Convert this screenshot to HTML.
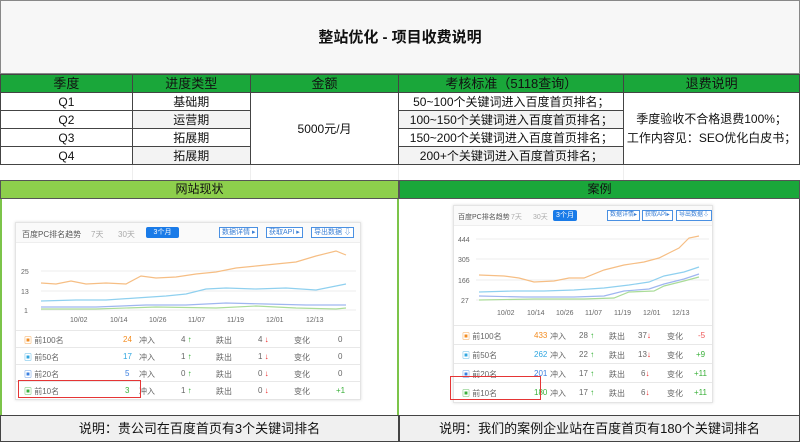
<!DOCTYPE html>
<html><head><meta charset="utf-8"><style>
*{margin:0;padding:0;box-sizing:border-box}
body{width:800px;height:442px;overflow:hidden;background:#fff;font-family:"Liberation Sans","Noto Sans CJK SC",sans-serif;position:relative;color:#111}
.a{position:absolute}
.title{left:0;top:0;width:800px;height:74px;background:#f7f7f7;border:1px solid #888;font-size:15px;font-weight:bold;text-align:center;line-height:74px}
table.t{position:absolute;left:0;top:74px;width:800px;border-collapse:collapse;font-size:12px}
table.t td{border:1px solid #444;text-align:center;height:18px;padding:0;line-height:16px}
table.t tr.h td{background:#1aa73a;color:#111;font-size:13px}
.g{background:#f3f3f3}
.c{font-size:8px;color:#555}
.box{background:#fff;border:1px solid #e4e4e4;box-shadow:0 0 3px #ddd}
.btn{position:absolute;border:1px solid #4a90e2;color:#3a7fd5;font-size:7px;line-height:9px;padding:0 2px;background:#fff}
.row{position:absolute;left:0;width:100%;border-top:1px solid #e8e8e8;font-size:8px;color:#666}
.row span{position:absolute}
.cap{top:415px;height:27px;background:#f0f0f0;border:1px solid #444;text-align:center;line-height:25px;font-size:13px}
</style></head><body>
<div class="a title">整站优化 - 项目收费说明</div>
<table class="t">
<colgroup><col style="width:132px"><col style="width:118px"><col style="width:149px"><col style="width:225px"><col style="width:176px"></colgroup>
<tr class="h"><td>季度</td><td>进度类型</td><td>金额</td><td>考核标准（5118查询）</td><td>退费说明</td></tr>
<tr><td>Q1</td><td>基础期</td><td rowspan="4">5000元/月</td><td>50~100个关键词进入百度首页排名；</td><td rowspan="4" style="line-height:19px">季度验收不合格退费100%；<br>工作内容见：SEO优化白皮书；</td></tr>
<tr><td>Q2</td><td class="g">运营期</td><td class="g">100~150个关键词进入百度首页排名；</td></tr>
<tr><td>Q3</td><td>拓展期</td><td>150~200个关键词进入百度首页排名；</td></tr>
<tr><td>Q4</td><td class="g">拓展期</td><td class="g">200+个关键词进入百度首页排名；</td></tr>
<tr><td style="border:none;border-right:1px solid #eee"></td><td style="border:none;border-right:1px solid #eee"></td><td style="border:none;border-right:1px solid #eee"></td><td style="border:none;border-right:1px solid #eee"></td><td style="border:none"></td></tr>
</table>
<div class="a" style="left:0;top:180px;width:399px;height:19px;background:#8dcf4c;border:1px solid #555;text-align:center;font-size:12px;line-height:17px">网站现状</div>
<div class="a" style="left:399px;top:180px;width:401px;height:19px;background:#1aa73a;border:1px solid #555;text-align:center;font-size:12px;line-height:17px">案例</div>
<div class="a" style="left:0;top:199px;width:399px;height:216px;border:2px solid #7cc44a;border-top:none;border-bottom:none"></div>
<div class="a" style="left:398px;top:199px;width:402px;height:216px;border-right:1px solid #444"></div>

<!-- left chart -->
<div class="a box" style="left:15px;top:222px;width:346px;height:178px">
<svg class="a" style="left:0;top:-7px" width="346" height="110">
<g stroke="#eee"><line x1="25" y1="55" x2="340" y2="55"/><line x1="25" y1="75" x2="340" y2="75"/><line x1="25" y1="94" x2="340" y2="94"/></g>
<g font-size="7" fill="#666" font-family="Liberation Sans"><text x="5" y="58">25</text><text x="5" y="78">13</text><text x="8" y="97">1</text>
<text x="54" y="106">10/02</text><text x="94" y="106">10/14</text><text x="133" y="106">10/26</text><text x="172" y="106">11/07</text><text x="211" y="106">11/19</text><text x="250" y="106">12/01</text><text x="290" y="106">12/13</text></g>
<polyline fill="none" stroke="#f6be84" stroke-width="1.2" points="25,67 40,68 55,65 70,68 90,67 110,68 125,60 140,62 160,61 180,58 200,56 220,52 240,50 260,48 280,46 300,40 320,35 330,39"/>
<polyline fill="none" stroke="#8fd0ef" stroke-width="1.2" points="25,85 60,84 90,84 120,82 150,80 170,78 190,73 210,72 240,73 270,72 300,74 320,70 330,68"/>
<polyline fill="none" stroke="#9fb6f0" stroke-width="1.2" points="25,91 80,91 130,89 170,89 210,87 250,88 290,89 330,89"/>
<polyline fill="none" stroke="#aadc99" stroke-width="1.2" points="25,93 80,93 140,91 200,92 240,90 280,92 320,93 330,92"/>
</svg>
<div class="a" style="left:0;top:0;width:100%;height:20px;background:#fafafa;border-bottom:1px solid #eee"></div>
<div class="a c" style="left:6px;top:6px">百度PC排名趋势</div>
<div class="a c" style="left:75px;top:6px;color:#aaa">7天</div>
<div class="a c" style="left:102px;top:6px;color:#aaa">30天</div>
<div class="a" style="left:130px;top:4px;width:33px;height:11px;background:#1a7be8;color:#fff;font-size:7px;text-align:center;line-height:11px;border-radius:2px">3个月</div>
<div class="btn" style="left:203px;top:4px">数据详情 ▸</div>
<div class="btn" style="left:250px;top:4px">获取API ▸</div>
<div class="btn" style="left:295px;top:4px">导出数据 ⇩</div>
<div class="row" style="top:107px;height:17px"><span style="left:8px;top:4px"><b style="color:#f38b1e">▣</b> 前100名</span><span style="left:107px;top:4px;color:#f38b1e">24</span><span style="left:123px;top:4px">冲入</span><span style="left:165px;top:4px">4 <b style="color:#2a2">↑</b></span><span style="left:200px;top:4px">跌出</span><span style="left:242px;top:4px">4 <b style="color:#e22">↓</b></span><span style="left:278px;top:4px">变化</span><span style="left:322px;top:4px">0</span></div>
<div class="row" style="top:124px;height:17px"><span style="left:8px;top:4px"><b style="color:#2fa6e0">▣</b> 前50名</span><span style="left:107px;top:4px;color:#2fa6e0">17</span><span style="left:123px;top:4px">冲入</span><span style="left:165px;top:4px">1 <b style="color:#2a2">↑</b></span><span style="left:200px;top:4px">跌出</span><span style="left:242px;top:4px">1 <b style="color:#e22">↓</b></span><span style="left:278px;top:4px">变化</span><span style="left:322px;top:4px">0</span></div>
<div class="row" style="top:141px;height:17px"><span style="left:8px;top:4px"><b style="color:#3a7fe0">▣</b> 前20名</span><span style="left:109px;top:4px;color:#3a7fe0">5</span><span style="left:123px;top:4px">冲入</span><span style="left:165px;top:4px">0 <b style="color:#2a2">↑</b></span><span style="left:200px;top:4px">跌出</span><span style="left:242px;top:4px">0 <b style="color:#e22">↓</b></span><span style="left:278px;top:4px">变化</span><span style="left:322px;top:4px">0</span></div>
<div class="row" style="top:158px;height:17px"><span style="left:8px;top:4px"><b style="color:#3ab03a">▣</b> 前10名</span><span style="left:109px;top:4px;color:#3ab03a">3</span><span style="left:123px;top:4px">冲入</span><span style="left:165px;top:4px">1 <b style="color:#2a2">↑</b></span><span style="left:200px;top:4px">跌出</span><span style="left:242px;top:4px">0 <b style="color:#e22">↓</b></span><span style="left:278px;top:4px">变化</span><span style="left:320px;top:4px;color:#3ab03a">+1</span></div>
</div>
<div class="a" style="left:18px;top:380px;width:123px;height:18px;border:1.5px solid #e53535"></div>

<!-- right chart -->
<div class="a box" style="left:453px;top:205px;width:260px;height:198px">
<svg class="a" style="left:0;top:12px" width="260" height="100">
<g stroke="#eee"><line x1="22" y1="21" x2="255" y2="21"/><line x1="22" y1="41" x2="255" y2="41"/><line x1="22" y1="62" x2="255" y2="62"/><line x1="22" y1="82" x2="255" y2="82"/></g>
<g font-size="7" fill="#666" font-family="Liberation Sans"><text x="4" y="24">444</text><text x="4" y="44">305</text><text x="4" y="65">166</text><text x="7" y="85">27</text>
<text x="43" y="97">10/02</text><text x="73" y="97">10/14</text><text x="102" y="97">10/26</text><text x="131" y="97">11/07</text><text x="160" y="97">11/19</text><text x="189" y="97">12/01</text><text x="218" y="97">12/13</text></g>
<polyline fill="none" stroke="#f6be84" stroke-width="1.2" points="25,57 50,58 65,60 80,64 100,63 115,60 130,60 150,52 170,47 190,44 205,40 215,35 225,30 235,20 245,18"/>
<polyline fill="none" stroke="#8fd0ef" stroke-width="1.2" points="25,74 60,73 90,73 120,72 150,70 175,67 195,64 210,58 230,54 245,49"/>
<polyline fill="none" stroke="#9fb6f0" stroke-width="1.2" points="25,78 70,79 120,79 150,78 170,73 195,71 210,66 230,61 245,56"/>
<polyline fill="none" stroke="#aadc99" stroke-width="1.2" points="25,82 80,81 130,81 160,80 175,74 200,73 210,68 230,63 245,59"/>
</svg>
<div class="a" style="left:0;top:0;width:100%;height:20px;background:#fafafa;border-bottom:1px solid #eee"></div>
<div class="a c" style="left:4px;top:6px;font-size:7px">百度PC排名趋势</div>
<div class="a c" style="left:57px;top:6px;color:#aaa;font-size:7px">7天</div>
<div class="a c" style="left:79px;top:6px;color:#aaa;font-size:7px">30天</div>
<div class="a" style="left:99px;top:4px;width:24px;height:11px;background:#1a7be8;color:#fff;font-size:7px;text-align:center;line-height:11px;border-radius:2px">3个月</div>
<div class="btn" style="left:153px;top:4px;font-size:6px">数据详情▸</div>
<div class="btn" style="left:188px;top:4px;font-size:6px">获取API▸</div>
<div class="btn" style="left:222px;top:4px;font-size:6px">导出数据⇩</div>
<div class="row" style="top:119px;height:19px"><span style="left:8px;top:5px"><b style="color:#f38b1e">▣</b> 前100名</span><span style="left:80px;top:5px;color:#f38b1e">433</span><span style="left:96px;top:5px">冲入</span><span style="left:125px;top:5px">28 <b style="color:#2a2">↑</b></span><span style="left:155px;top:5px">跌出</span><span style="left:184px;top:5px">37<b style="color:#e22">↓</b></span><span style="left:213px;top:5px">变化</span><span style="left:244px;top:5px;color:#e55">-5</span></div>
<div class="row" style="top:138px;height:19px"><span style="left:8px;top:5px"><b style="color:#2fa6e0">▣</b> 前50名</span><span style="left:80px;top:5px;color:#2fa6e0">262</span><span style="left:96px;top:5px">冲入</span><span style="left:125px;top:5px">22 <b style="color:#2a2">↑</b></span><span style="left:155px;top:5px">跌出</span><span style="left:184px;top:5px">13<b style="color:#e22">↓</b></span><span style="left:213px;top:5px">变化</span><span style="left:242px;top:5px;color:#3ab03a">+9</span></div>
<div class="row" style="top:157px;height:19px"><span style="left:8px;top:5px"><b style="color:#3a7fe0">▣</b> 前20名</span><span style="left:80px;top:5px;color:#3a7fe0">201</span><span style="left:96px;top:5px">冲入</span><span style="left:125px;top:5px">17 <b style="color:#2a2">↑</b></span><span style="left:155px;top:5px">跌出</span><span style="left:187px;top:5px">6<b style="color:#e22">↓</b></span><span style="left:213px;top:5px">变化</span><span style="left:240px;top:5px;color:#3ab03a">+11</span></div>
<div class="row" style="top:176px;height:19px"><span style="left:8px;top:5px"><b style="color:#3ab03a">▣</b> 前10名</span><span style="left:80px;top:5px;color:#3ab03a">180</span><span style="left:96px;top:5px">冲入</span><span style="left:125px;top:5px">17 <b style="color:#2a2">↑</b></span><span style="left:155px;top:5px">跌出</span><span style="left:187px;top:5px">6<b style="color:#e22">↓</b></span><span style="left:213px;top:5px">变化</span><span style="left:240px;top:5px;color:#3ab03a">+11</span></div>
</div>
<div class="a" style="left:450px;top:376px;width:91px;height:24px;border:1.5px solid #e53535"></div>

<div class="a cap" style="left:0;width:399px">说明：贵公司在百度首页有3个关键词排名</div>
<div class="a cap" style="left:399px;width:401px">说明：我们的案例企业站在百度首页有180个关键词排名</div>
</body></html>
